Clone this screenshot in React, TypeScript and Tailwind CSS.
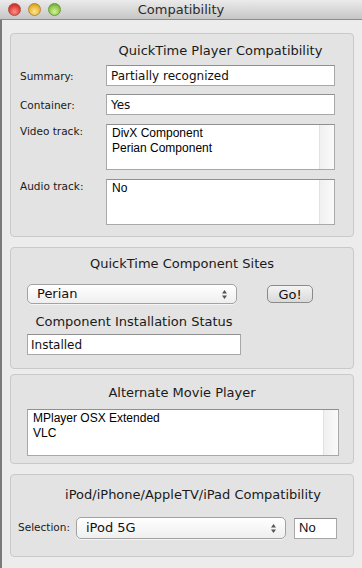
import React from 'react';

const LUCIDA = "font-['DejaVu_Sans',sans-serif]";
const HELV = "font-['Liberation_Sans',Arial,sans-serif]";

const Box: React.FC<{ className?: string; children: React.ReactNode }> = ({ className = '', children }) => (
  <div className={`ml-[8px] mr-[8px] rounded-[4px] border border-[#c9c9c9] bg-[#e3e3e3] ${className}`}>{children}</div>
);

const Field: React.FC<{ className?: string; text: string }> = ({ className = '', text }) => (
  <div className={`border border-[#a8a8a8] border-t-[#8f8f8f] bg-white px-[4px] flex items-center text-[#111] ${className}`}>
    {text}
  </div>
);

const ListBox: React.FC<{ className?: string; lines: string[] }> = ({ className = '', lines }) => (
  <div className={`flex border border-[#a8a8a8] border-t-[#8f8f8f] bg-white ${className}`}>
    <div className={`flex-1 pl-[5px] pt-[1px] text-[12px] leading-[15px] text-black ${HELV}`}>
      {lines.map(l => <div key={l}>{l}</div>)}
    </div>
    <div className="w-[15px] border-l border-[#e2e2e2] bg-gradient-to-r from-[#f0f0f0] to-[#fafafa]" />
  </div>
);

const Arrows = () => (
  <svg width="7" height="11" viewBox="0 0 7 11" className="shrink-0">
    <path d="M3.5 1 L6 4.5 H1 Z" fill="#555" />
    <path d="M3.5 10 L6 6.5 H1 Z" fill="#555" />
  </svg>
);

const Popup: React.FC<{ className?: string; text: string }> = ({ className = '', text }) => (
  <div
    className={`flex items-center justify-between rounded-[5px] border border-[#a2a2a2] bg-gradient-to-b from-white to-[#efefef] pl-[9px] pr-[8px] shadow-[0_1px_0_rgba(255,255,255,0.6)] ${className}`}
  >
    <span className="text-[13px] text-[#111]">{text}</span>
    <Arrows />
  </div>
);

const App: React.FC = () => {
  return (
    <div className={`w-[362px] h-[568px] overflow-hidden bg-[#ececec] flex flex-col ${LUCIDA} text-[#1a1a1a]`}>
      {/* title bar */}
      <div className="relative h-[20px] shrink-0 flex items-center justify-center border-b border-[#8c8c8c] bg-gradient-to-b from-[#ebebeb] to-[#c6c6c6]">
        <div className="absolute left-[8px] top-[3px] flex gap-[7px]">
          <span className="w-[13px] h-[13px] rounded-full border border-[#b04a45] bg-[radial-gradient(circle_at_50%_70%,#f5958c,#de3f36_60%,#b3261f)]" />
          <span className="w-[13px] h-[13px] rounded-full border border-[#b08a30] bg-[radial-gradient(circle_at_50%_70%,#fbe59a,#e8b531_60%,#b98b15)]" />
          <span className="w-[13px] h-[13px] rounded-full border border-[#6a9b3c] bg-[radial-gradient(circle_at_50%_70%,#d6f29a,#8bc549_60%,#5a9526)]" />
        </div>
        <span className="text-[13px] text-[#2b2b2b]">Compatibility</span>
      </div>

      <div className="flex-1 border-l-2 border-[#7a7a7a]">
        {/* QuickTime Player Compatibility */}
        <Box className="mt-[13px] pt-[9px] pb-[11px]">
          <div className="pl-[95px] pr-[18px] text-center text-[13px] leading-[16px]">QuickTime Player Compatibility</div>
          <div className="mt-[6px] grid grid-cols-[86px_229px] gap-y-[8px] pl-[9px] text-[10.5px]">
            <div className="pt-[4px]">Summary:</div>
            <Field className="h-[21px] text-[12px]" text="Partially recognized" />
            <div className="pt-[4px]">Container:</div>
            <Field className="h-[21px] text-[12px]" text="Yes" />
            <div className="mt-[1px]">Video track:</div>
            <ListBox className="h-[46px] mt-[1px]" lines={['DivX Component', 'Perian Component']} />
            <div className="mt-[1px]">Audio track:</div>
            <ListBox className="h-[46px] mt-[1px]" lines={['No']} />
          </div>
        </Box>

        {/* QuickTime Component Sites */}
        <Box className="mt-[10px] pt-[8px] pb-[13px] pl-[16px]">
          <div className="pr-[16px] text-center text-[13px] leading-[16px]">QuickTime Component Sites</div>
          <div className="mt-[12px] flex items-center">
            <Popup className="w-[210px] h-[20px]" text="Perian" />
            <button className="ml-[30px] h-[18px] w-[46px] rounded-[5px] border border-[#8a8a8a] bg-gradient-to-b from-[#f4f4f4] to-[#d9d9d9] text-[13px] leading-none text-[#111]">
              Go!
            </button>
          </div>
          <div className="mt-[10px] w-[214px] text-center text-[13px] leading-[16px]">Component Installation Status</div>
          <Field className="mt-[4px] w-[214px] h-[21px] text-[12px] pl-[3px]" text="Installed" />
        </Box>

        {/* Alternate Movie Player */}
        <Box className="mt-[5px] pt-[10px] pb-[7px] pl-[16px]">
          <div className="pr-[16px] text-center text-[13px] leading-[16px]">Alternate Movie Player</div>
          <ListBox className="mt-[8px] w-[312px] h-[47px]" lines={['MPlayer OSX Extended', 'VLC']} />
        </Box>

        {/* iPod compatibility */}
        <Box className="mt-[10px] pt-[12px] pb-[17px]">
          <div className="pl-[40px] pr-[18px] text-center text-[13px] leading-[16px]">iPod/iPhone/AppleTV/iPad Compatibility</div>
          <div className="mt-[14px] flex items-center pl-[7px]">
            <span className="text-[10.5px] w-[58px]">Selection:</span>
            <Popup className="w-[210px] h-[22px]" text="iPod 5G" />
            <Field className={`ml-[8px] w-[43px] h-[21px] text-[13px] ${HELV}`} text="No" />
          </div>
        </Box>
      </div>
    </div>
  );
};

export default App;
